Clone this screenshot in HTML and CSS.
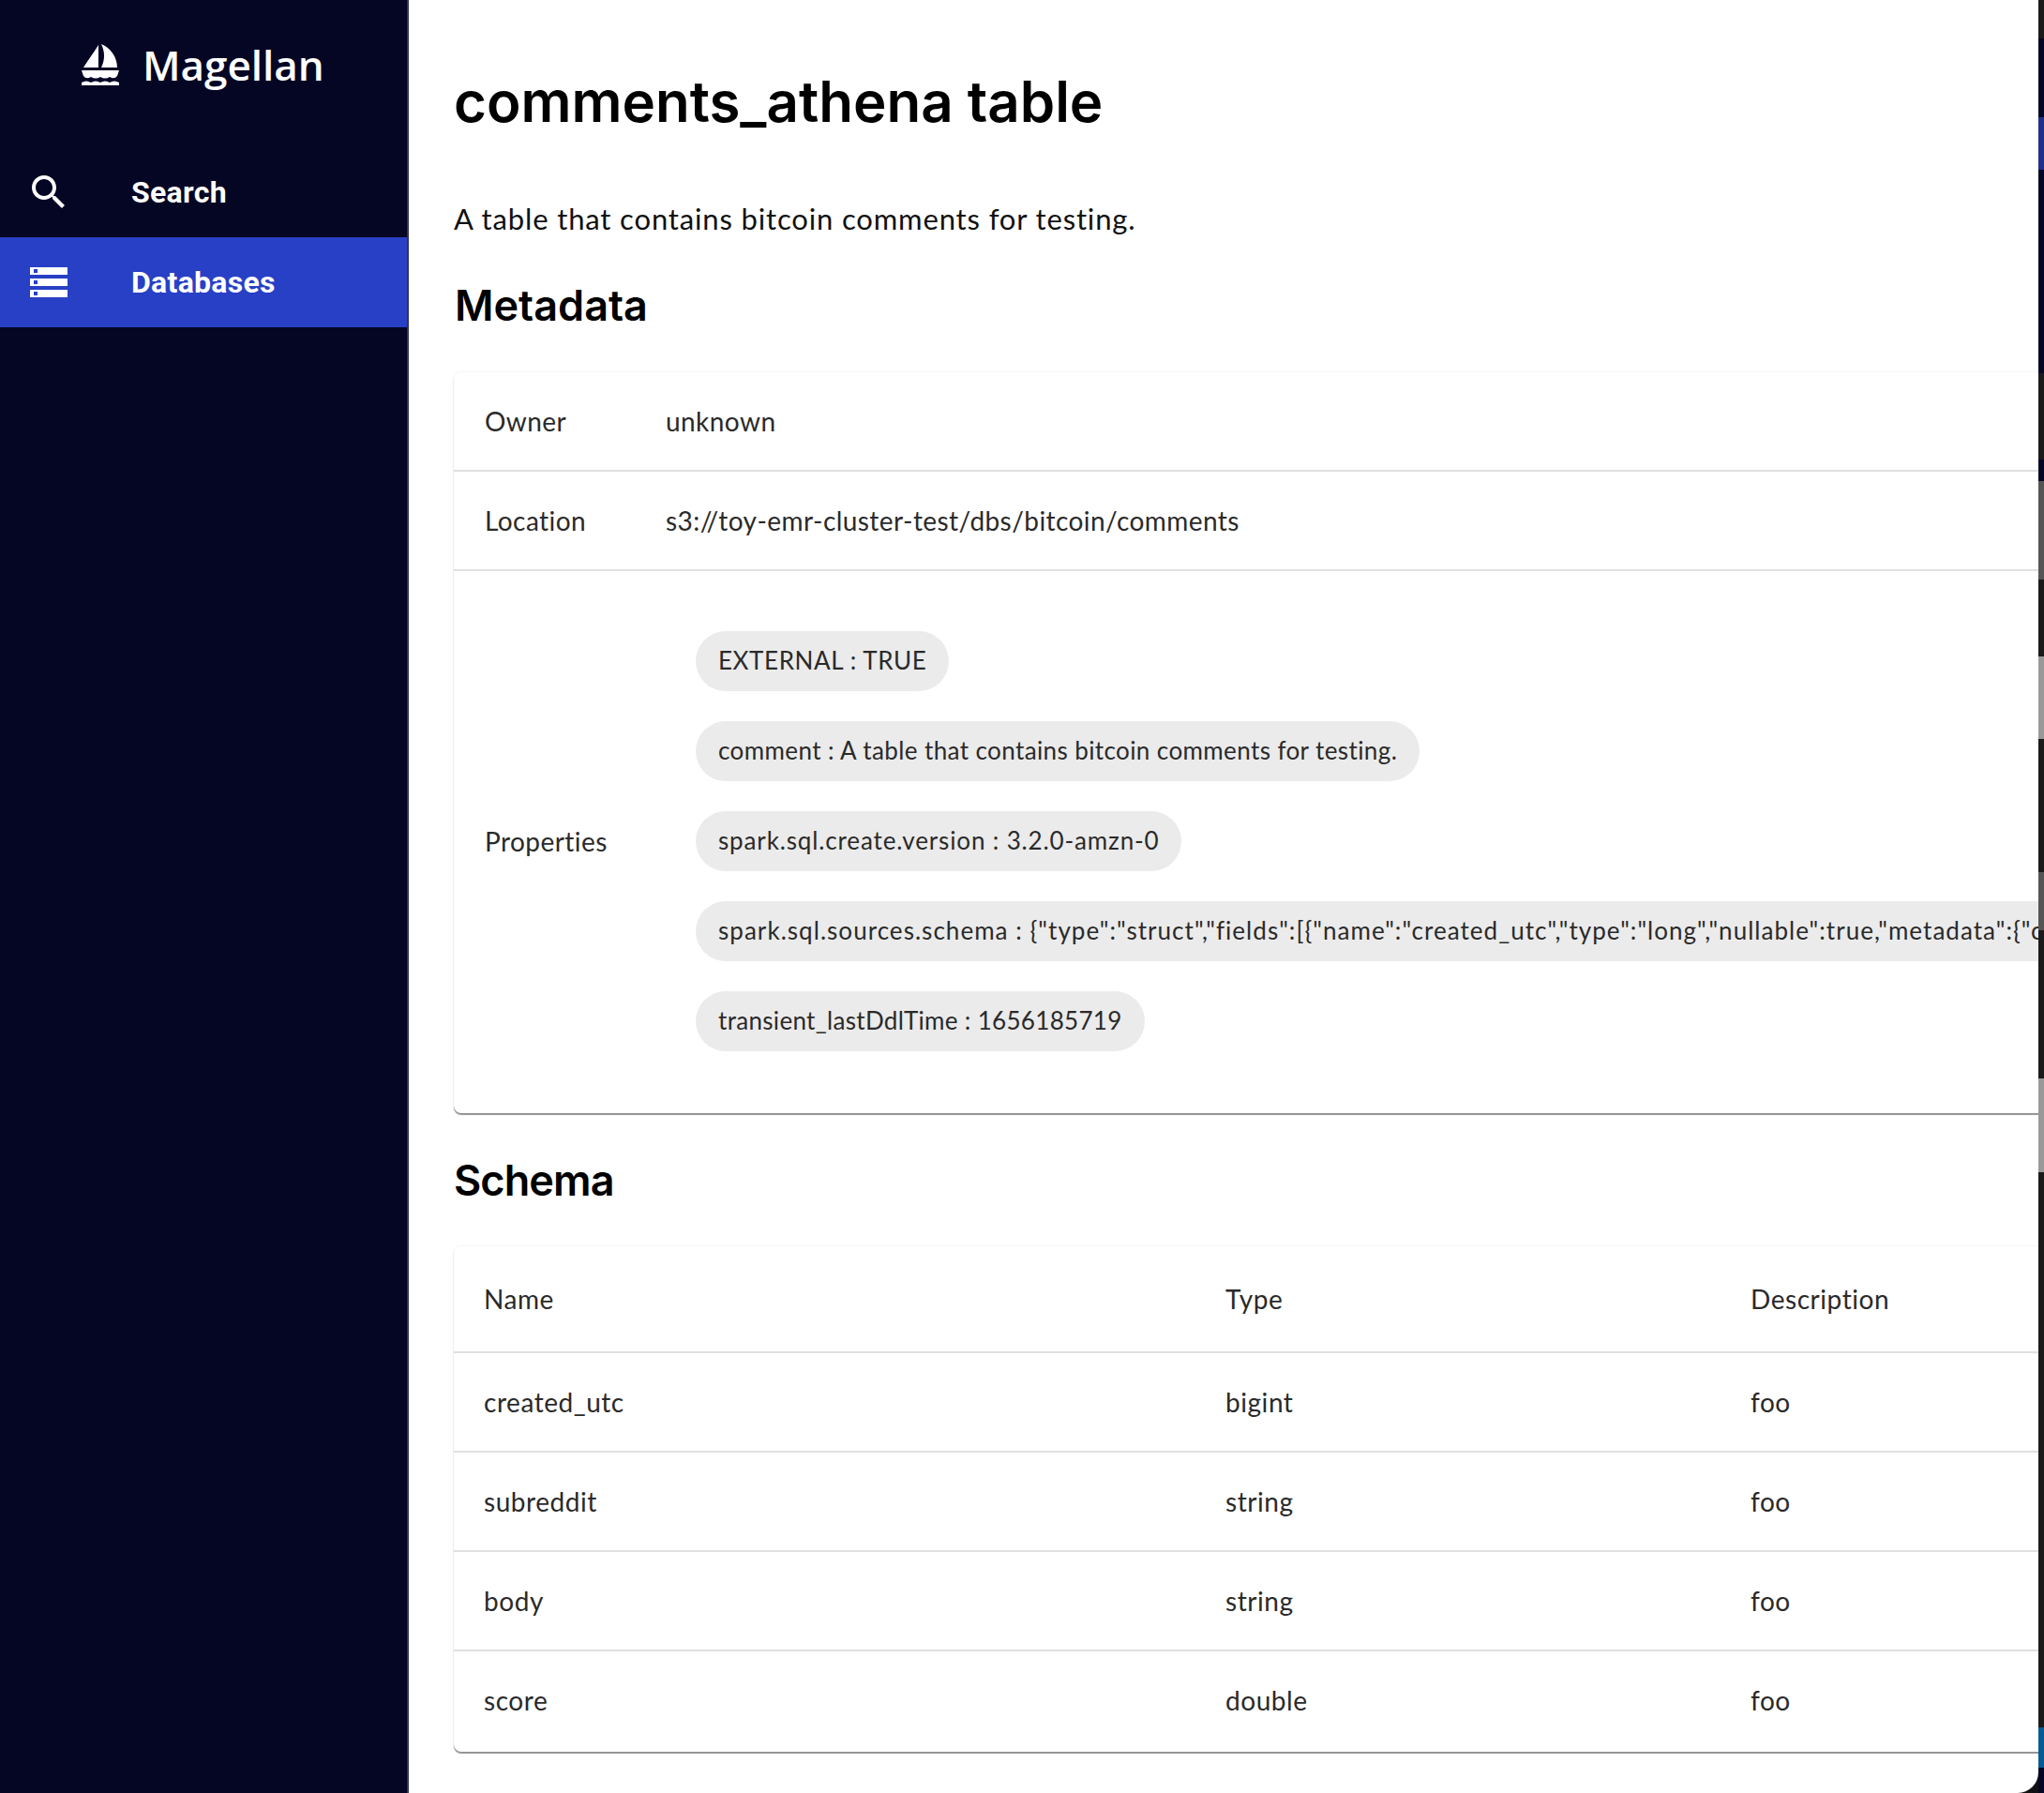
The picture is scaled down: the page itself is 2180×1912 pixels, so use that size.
FILE: index.html
```html
<!DOCTYPE html>
<html lang="en">
<head>
  <meta charset="UTF-8">
  <meta name="viewport" content="width=device-width, initial-scale=1.0">
  <title>Magellan</title>
  <link rel="stylesheet" href="styles.css">
</head>
<body>
  <div class="app">
    <aside class="sidebar">
      <div class="logo">
        <svg class="logo-icon" viewBox="0 0 40 44" width="40" height="44">
          <path fill="#fff" d="M18 1 V25 H2 C7 17 13 9 18 1 Z"/>
          <path fill="#fff" d="M21 0 C31 4 38 14 38 25 H21 C25 17 25 8 21 0 Z"/>
          <path fill="#fff" d="M0 28 H40 L38 34 Q35 38 30 35 Q25 38 20 35 Q15 38 10 35 Q5 38 2 34 Z"/>
          <path fill="#fff" d="M0 41 Q5 38 10 41 Q15 38 20 41 Q25 38 30 41 Q35 38 40 41 V44 H0 Z"/>
        </svg>
        <span class="logo-text">Magellan</span>
      </div>
      <nav>
        <a class="nav-item">
          <svg class="nav-icon" viewBox="0 0 24 24" width="48" height="48">
            <path fill="#fff" d="M15.5 14h-.79l-.28-.27C15.41 12.59 16 11.11 16 9.5 16 5.91 13.09 3 9.5 3S3 5.91 3 9.5 5.91 16 9.5 16c1.61 0 3.09-.59 4.23-1.57l.27.28v.79l5 4.99L20.49 19l-4.99-5zm-6 0C7.01 14 5 11.99 5 9.5S7.01 5 9.5 5 14 7.01 14 9.5 11.99 14 9.5 14z"/>
          </svg>
          <span>Search</span>
        </a>
        <a class="nav-item active">
          <svg class="nav-icon" viewBox="0 0 24 24" width="48" height="48">
            <path fill="#fff" d="M2 20h20v-4H2v4zm2-3h2v2H4v-2zM2 4v4h20V4H2zm4 3H4V5h2v2zm-4 7h20v-4H2v4zm2-3h2v2H4v-2z"/>
          </svg>
          <span>Databases</span>
        </a>
      </nav>
    </aside>

    <main class="content">
      <h1>comments_athena table</h1>
      <p class="description">A table that contains bitcoin comments for testing.</p>

      <h2 class="metadata-title">Metadata</h2>
      <section class="card">
        <div class="meta-row">
          <div class="label">Owner</div>
          <div>unknown</div>
        </div>
        <div class="meta-row">
          <div class="label">Location</div>
          <div>s3://toy-emr-cluster-test/dbs/bitcoin/comments</div>
        </div>
        <div class="meta-row props-row">
          <div class="label">Properties</div>
          <div class="chips">
            <span class="chip chip-caps">EXTERNAL : TRUE</span>
            <span class="chip">comment : A table that contains bitcoin comments for testing.</span>
            <span class="chip chip-version">spark.sql.create.version : 3.2.0-amzn-0</span>
            <span class="chip chip-long">spark.sql.sources.schema : {"type":"struct","fields":[{"name":"created_utc","type":"long","nullable":true,"metadata":{"c</span>
            <span class="chip chip-time">transient_lastDdlTime : 1656185719</span>
          </div>
        </div>
      </section>

      <h2 class="schema-title">Schema</h2>
      <section class="card schema-card">
        <div class="schema-row schema-head">
          <div>Name</div><div>Type</div><div>Description</div>
        </div>
        <div class="schema-row">
          <div>created_utc</div><div>bigint</div><div>foo</div>
        </div>
        <div class="schema-row">
          <div>subreddit</div><div>string</div><div>foo</div>
        </div>
        <div class="schema-row">
          <div>body</div><div>string</div><div>foo</div>
        </div>
        <div class="schema-row">
          <div>score</div><div>double</div><div>foo</div>
        </div>
      </section>
    </main>

    <div class="edge">
      <div class="seg-dark h41"></div>
      <div class="seg-navy h84"></div>
      <div class="seg-blue h56"></div>
      <div class="seg-navy h217"></div>
      <div class="seg-dark h92"></div>
      <div class="seg-navy h23"></div>
      <div class="seg-grey h105"></div>
      <div class="seg-dark h82"></div>
      <div class="seg-light h88"></div>
      <div class="seg-dark h142"></div>
      <div class="seg-grey h62"></div>
      <div class="seg-dark h158"></div>
      <div class="seg-light h100"></div>
      <div class="seg-dark h592"></div>
      <div class="seg-teal h43"></div>
      <div class="seg-navy fill"></div>
    </div>
  </div>
</body>
</html>
```

FILE: styles.css
```css
* {
  box-sizing: border-box;
}

html, body {
  margin: 0;
  height: 100%;
}

body {
  background: #111;
  font-family: "Lato", sans-serif;
  color: #1f1f1f;
  font-size: 28px;
}

.app {
  display: flex;
  width: 2180px;
  height: 1912px;
  overflow: hidden;
}

/* sidebar */
.sidebar {
  width: 436px;
  flex-shrink: 0;
  background: #050624;
  border-right: 2px solid #33344c;
  color: #fff;
}

.logo {
  height: 157px;
  padding: 47px 0 0 87px;
  display: flex;
  align-items: flex-start;
}

.logo-text {
  margin-left: 25px;
  margin-top: -8px;
  font-family: "Open Sans", sans-serif;
  font-size: 44px;
  font-weight: 600;
  line-height: 60px;
}

.nav-item {
  height: 96px;
  display: flex;
  align-items: center;
  padding-left: 28px;
  font-family: "Roboto", sans-serif;
  font-size: 32px;
  font-weight: 700;
  letter-spacing: 0.3px;
}

.nav-item.active {
  background: #2740c5;
}

.nav-icon {
  margin-right: 64px;
  flex-shrink: 0;
}

/* main */
.content {
  flex: 1;
  min-width: 0;
  background: #fff;
  padding: 60px 0 0 48px;
  overflow: hidden;
  border-bottom-right-radius: 22px;
}

h1 {
  margin: 0;
  font-family: "Inter", sans-serif;
  font-size: 60px;
  font-weight: 600;
  line-height: 96px;
  color: #000;
}

.description {
  margin: 55px 0 0;
  line-height: 44px;
  font-size: 31px;
  letter-spacing: 0.85px;
  color: #111;
}

h2 {
  margin: 0;
  font-family: "Inter", sans-serif;
  font-size: 45px;
  font-weight: 600;
  line-height: 60px;
  color: #000;
}

.metadata-title {
  margin-top: 41px;
  padding-left: 1px;
}

.schema-title {
  margin-top: 42px;
  letter-spacing: -0.9px;
}

.card {
  margin-top: 41px;
  margin-right: -20px;
  background: #fff;
  border-radius: 8px;
  box-shadow: 0 2px 1px rgba(0, 0, 0, 0.42), 0 0 3px rgba(0, 0, 0, 0.08);
}

.schema-card {
  margin-top: 40px;
  padding-bottom: 1px;
}

.meta-row {
  display: grid;
  grid-template-columns: 193px 1fr;
  align-items: center;
  height: 106px;
  padding-left: 33px;
  border-bottom: 2px solid #e0e0e0;
  letter-spacing: 0.44px;
  color: #2a2a2a;
}

.props-row {
  height: 578px;
  border-bottom-color: transparent;
}

.chips {
  display: flex;
  flex-direction: column;
  align-items: flex-start;
  gap: 32px;
  padding-left: 32px;
  min-width: 0;
}

.chip {
  height: 64px;
  line-height: 62px;
  padding: 0 24px;
  border-radius: 32px;
  background: #ebebeb;
  font-size: 26px;
  letter-spacing: 0.4px;
  white-space: nowrap;
}

.chip-caps {
  letter-spacing: 0.6px;
}

.chip-version {
  letter-spacing: 0.86px;
}

.chip-long {
  letter-spacing: 1.04px;
  padding-right: 60px;
}

.chip-time {
  letter-spacing: 0.32px;
}

.schema-row {
  display: grid;
  grid-template-columns: 791px 560px 1fr;
  align-items: center;
  height: 106px;
  padding-left: 32px;
  border-bottom: 2px solid #e0e0e0;
  letter-spacing: 0.55px;
  color: #2a2a2a;
}

.schema-head {
  height: 114px;
}

.schema-row:last-child {
  border-bottom-color: transparent;
}

/* the window behind this one, barely visible at the right edge */
.edge {
  width: 6px;
  flex-shrink: 0;
  display: flex;
  flex-direction: column;
}

.seg-dark { background: #1a1a1a; }
.seg-navy { background: #050624; }
.seg-blue { background: #1f2f8a; }
.seg-grey { background: #555; }
.seg-light { background: #999; }
.seg-teal { background: #075a92; }

.h23 { height: 23px; }
.h41 { height: 41px; }
.h43 { height: 43px; }
.h56 { height: 56px; }
.h62 { height: 62px; }
.h82 { height: 82px; }
.h84 { height: 84px; }
.h88 { height: 88px; }
.h92 { height: 92px; }
.h100 { height: 100px; }
.h105 { height: 105px; }
.h142 { height: 142px; }
.h158 { height: 158px; }
.h217 { height: 217px; }
.h592 { height: 592px; }
.fill { flex: 1; }
```
